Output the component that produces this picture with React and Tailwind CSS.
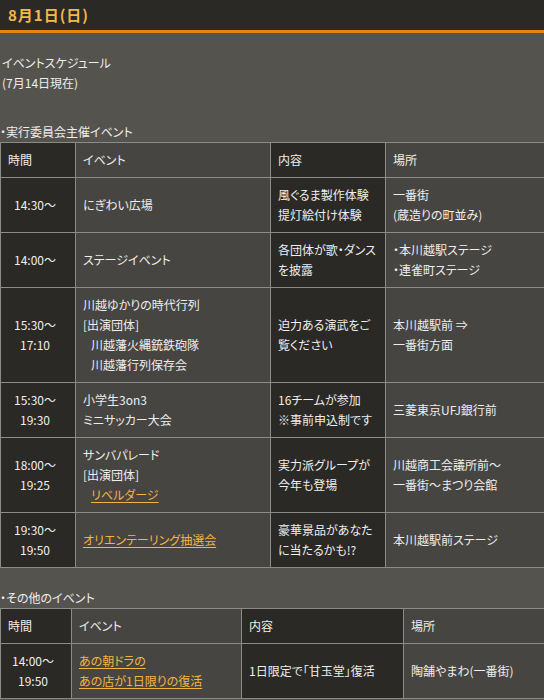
import React from 'react';

const font = "font-['Noto_Sans_CJK_JP','Noto_Sans',sans-serif] [font-feature-settings:'palt']";

const dark = 'bg-[#2a2925]';
const mid = 'bg-[#474541]';
const cell = 'border border-[#8c8b86] px-[7px] py-[7px] align-middle whitespace-nowrap';

const Link = ({ children }) => (
  <a href="#" className="text-[#f4b53f] underline underline-offset-2">
    {children}
  </a>
);

const Lines = ({ lines }) =>
  lines.map((l, i) => (
    <React.Fragment key={i}>
      {i > 0 && <br />}
      {l}
    </React.Fragment>
  ));

const mainRows = [
  {
    time: ['14:30〜'],
    event: ['にぎわい広場'],
    content: ['風ぐるま製作体験', '提灯絵付け体験'],
    place: ['一番街', '(蔵造りの町並み)'],
  },
  {
    time: ['14:00〜'],
    event: ['ステージイベント'],
    content: ['各団体が歌・ダンス', 'を披露'],
    place: ['・本川越駅ステージ', '・連雀町ステージ'],
  },
  {
    time: ['15:30〜', '17:10'],
    event: [
      '川越ゆかりの時代行列',
      '[出演団体]',
      <span className="ml-[8px]">川越藩火縄銃鉄砲隊</span>,
      <span className="ml-[8px]">川越藩行列保存会</span>,
    ],
    content: ['迫力ある演武をご', '覧ください'],
    place: ['本川越駅前 ⇒', '一番街方面'],
  },
  {
    time: ['15:30〜', '19:30'],
    event: ['小学生3on3', 'ミニサッカー大会'],
    content: ['16チームが参加', '※事前申込制です'],
    place: ['三菱東京UFJ銀行前'],
  },
  {
    time: ['18:00〜', '19:25'],
    event: [
      'サンバパレード',
      '[出演団体]',
      <span className="ml-[8px]">
        <Link>リベルダージ</Link>
      </span>,
    ],
    content: ['実力派グループが', '今年も登場'],
    place: ['川越商工会議所前〜', '一番街〜まつり会館'],
  },
  {
    time: ['19:30〜', '19:50'],
    event: [<Link>オリエンテーリング抽選会</Link>],
    content: ['豪華景品があなた', 'に当たるかも!?'],
    place: ['本川越駅前ステージ'],
  },
];

const otherRows = [
  {
    time: ['14:00〜', '19:50'],
    event: [<Link>あの朝ドラの</Link>, <Link>あの店が1日限りの復活</Link>],
    content: ['1日限定で「甘玉堂」復活'],
    place: ['陶舗やまわ(一番街)'],
  },
];

const ScheduleTable = ({ widths, rows }) => (
  <table className="w-[544px] table-fixed border-collapse text-[12px] leading-[20px] text-[#eeeeee]">
    <colgroup>
      {widths.map((w, i) => (
        <col key={i} style={{ width: w }} />
      ))}
    </colgroup>
    <thead>
      <tr>
        <th className={`${cell} ${dark} text-left font-normal`}>時間</th>
        <th className={`${cell} ${mid} text-left font-normal`}>イベント</th>
        <th className={`${cell} ${dark} text-left font-normal`}>内容</th>
        <th className={`${cell} ${mid} text-left font-normal`}>場所</th>
      </tr>
    </thead>
    <tbody>
      {rows.map((r, i) => (
        <tr key={i}>
          <td className={`${cell} ${dark} text-center !pl-[4px] !pr-[10px]`}>
            <Lines lines={r.time} />
          </td>
          <td className={`${cell} ${mid}`}>
            <Lines lines={r.event} />
          </td>
          <td className={`${cell} ${dark}`}>
            <Lines lines={r.content} />
          </td>
          <td className={`${cell} ${mid}`}>
            <Lines lines={r.place} />
          </td>
        </tr>
      ))}
    </tbody>
  </table>
);

export default function App() {
  return (
    <div className={`${font} w-[544px] h-[700px] overflow-hidden bg-[#55534e] text-[12px] leading-[20px] text-[#eeeeee]`}>
      <header className="h-[30px] bg-[#2a2925] border-b-[3px] border-[#e3870f] box-content flex items-center px-[8px]">
        <h2 className="text-[15px] font-bold text-[#f6b845] tracking-[1px]">8月1日(日)</h2>
      </header>

      <div className="pt-[20px] pl-[2px]">
        <p>イベントスケジュール</p>
        <p>(7月14日現在)</p>
      </div>

      <h3 className="mt-[29px]">・実行委員会主催イベント</h3>
      <ScheduleTable widths={['75px', '195px', '115px', '159px']} rows={mainRows} />

      <h3 className="mt-[20px]">・その他のイベント</h3>
      <ScheduleTable widths={['71px', '170px', '162px', '141px']} rows={otherRows} />
    </div>
  );
}
